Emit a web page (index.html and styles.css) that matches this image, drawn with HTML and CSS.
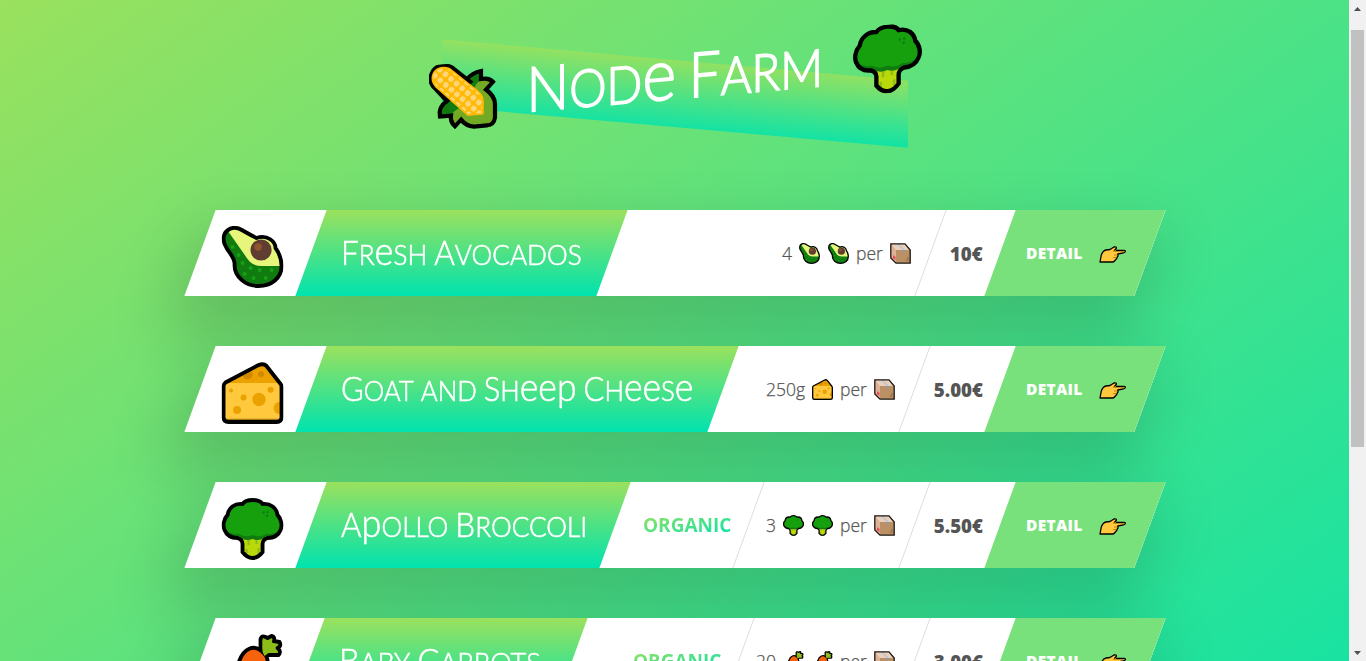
FILE: index.html
```
<!DOCTYPE html>
<html lang="en">
<head>
<meta charset="utf-8">
<title>Node Farm</title>
<link rel="stylesheet" href="styles.css">
</head>
<body>
<svg class="sprite" aria-hidden="true">
  <defs>
    <clipPath id="avo-clip"><path d="M2 13C2 5 9 1 15 2C19 2.5 21 5 35 12C46 8 54 16 54 22C59 29 60 35 60 40C60 52 50 60 37 60C23 60 13 50 13 39C14 33 8 27 5 22C3 19 2 16 2 13Z"/></clipPath>
    <clipPath id="cheese-clip"><path d="M2 55V24Q2 22 4 20.5L37 3Q42 1 45 4L59 22Q60 23 60 25V55Q60 60 55 60H7Q2 60 2 55Z"/></clipPath>
    <clipPath id="broc-clip"><path id="broc-shape" d="M31 2C26 2 23 3 21 6C13 5 7 10 6 17C2 21 1 28 3 32C5 37 10 40 16 40C19 41 21 43 21 46V54C24 58 28 60 31 60C34 60 38 58 41 54V46C41 43 43 41 46 40C52 40 57 37 59 32C61 28 60 21 56 17C55 10 49 5 41 6C39 3 36 2 31 2Z"/></clipPath>
    <pattern id="kernels" width="7.6" height="7.6" patternUnits="userSpaceOnUse" patternTransform="rotate(43)"><rect width="7.6" height="7.6" fill="#ffb900"/><circle cx="3.8" cy="3.8" r="2.9" fill="#ffd67a"/></pattern>
  </defs>
  <symbol id="avocado" viewBox="0 0 62 62">
    <g clip-path="url(#avo-clip)"><rect width="62" height="62" fill="#107c10"/><path d="M5 3L26 33Q31 40 40 40H62V0Z" fill="#e5f67b"/>
    <g fill="#16a016"><circle cx="11" cy="21" r="2"/><circle cx="17" cy="29" r="2"/><circle cx="13" cy="34" r="1"/><circle cx="21" cy="37" r="2"/><circle cx="29" cy="42" r="2"/><circle cx="38" cy="44" r="2"/><circle cx="50" cy="44" r="2"/><circle cx="23" cy="48" r="2"/><circle cx="32" cy="52" r="2"/><circle cx="44" cy="52" r="2"/></g>
    <circle cx="39.5" cy="24" r="10.6" fill="#603d30"/><circle cx="36.5" cy="21" r="3.7" fill="#8e562e"/></g>
    <path d="M2 13C2 5 9 1 15 2C19 2.5 21 5 35 12C46 8 54 16 54 22C59 29 60 35 60 40C60 52 50 60 37 60C23 60 13 50 13 39C14 33 8 27 5 22C3 19 2 16 2 13Z" fill="none" stroke="#000" stroke-width="3.9"/>
  </symbol>
  <symbol id="cheese" viewBox="0 0 62 62">
    <g clip-path="url(#cheese-clip)"><rect width="62" height="62" fill="#ffc83d"/><path d="M0 0H62V21H0Z" fill="#eba200"/><g fill="#d08805"><circle cx="26" cy="12.5" r="5"/><circle cx="39.5" cy="12.3" r="3"/></g>
    <g fill="#eba200"><circle cx="9.5" cy="28.5" r="2"/><circle cx="22" cy="35.5" r="3"/><circle cx="37.5" cy="37.5" r="6.7"/><circle cx="49" cy="27.8" r="3"/><circle cx="15.5" cy="48" r="4"/><circle cx="58" cy="46" r="6"/></g><path d="M0 57.5H62" stroke="#a87910" stroke-width="1.3"/></g>
    <path d="M2 55V24Q2 22 4 20.5L37 3Q42 1 45 4L59 22Q60 23 60 25V55Q60 60 55 60H7Q2 60 2 55Z" fill="none" stroke="#000" stroke-width="3.9"/>
  </symbol>
  <symbol id="broccoli" viewBox="0 0 62 62">
    <g clip-path="url(#broc-clip)"><rect width="62" height="62" fill="#bad80a"/><path d="M27 42V47M35 42V46M25 51V56M37 50V56" stroke="#8cbd18" stroke-width="2.2"/><path d="M0 0H62V39C54 42 46 39 41 41Q36 43 31 41Q26 43 21 41C16 39 8 42 0 39Z" fill="#107c10"/><path d="M0 0H62V26C58 35 51 36 45 36Q38 40 31 37Q24 40 17 36C11 36 4 35 0 26Z" fill="#16a00e"/><g fill="#107c10"><circle cx="42" cy="14.5" r="1.2"/><circle cx="46" cy="14" r="1.2"/><circle cx="45.5" cy="17.7" r="1.2"/></g></g>
    <use href="#broc-shape" fill="none" stroke="#000" stroke-width="3.9"/>
  </symbol>
  <symbol id="carrot" viewBox="0 0 62 62">
    <path d="M39 21V5Q40 1 44 3L46 4L50 2Q54 3 52 7L58 8Q60 12 56 14Q60 17 57 21L48 21Z" fill="#8cbd18" stroke="#000" stroke-width="3.9" stroke-linejoin="round"/>
    <path d="M3 59L17 29C22 13 33 11 40 17C49 24 47 33 41 39Z" fill="#f7630c" stroke="#000" stroke-width="3.9" stroke-linejoin="round"/>
    <path d="M41 18V6L46 9L51 5L50 10L57 10L52 15L57 19H47L43 22Z" fill="#8cbd18"/>
  </symbol>
  <symbol id="corn" viewBox="0 0 69 69">
    <path d="M38 17Q43 11 52 10V18Q60 17 64 22L57 29C63 34 66 38 66 44V58Q65 65 58 65H45Q37 64 32 57L26 63Q21 58 22 52H11Q9 42 18 37Z" fill="#73aa24"/>
    <path d="M38 18Q43 11 52 10V18Q47 22 45 27ZM11 52Q9 42 20 36L31 45Q25 47 22 52Z" fill="#107c10"/>
    <path d="M38 17Q43 11 52 10V18Q60 17 64 22L57 29C63 34 66 38 66 44V58Q65 65 58 65H45Q37 64 32 57L26 63Q21 58 22 52H11Q9 42 18 37" fill="none" stroke="#000" stroke-width="4.2"/>
    <path d="M4 6C8 0 18 0 24 5L41 20L18 37L6 23C0 17 1 11 4 6Z" fill="none" stroke="#000" stroke-width="4.4"/>
    <path d="M5 7C9 2 18 2 23 7L49 30Q54 35 54 40V53H39L7 22C3 17 2 12 5 7Z" fill="url(#kernels)" stroke="#ffb900" stroke-width="1.5"/>
  </symbol>
  <symbol id="package" viewBox="0 0 21 21">
    <path d="M1 1H15L20 7V20H6L1 15Z" fill="#e0b197"/><path d="M1 1H15L20 7H6Z" fill="#edceb9"/><path d="M6 7H20V20H6Z" fill="#bc9065"/><path d="M7 1L12 7H15L9 1Z" fill="#b8c9cf"/><path d="M12 7H15V9H12Z" fill="#929da0"/><path d="M3 12L5.5 14V17L3 15Z" fill="#e44b55"/><path d="M16 17H19M17 15H19" stroke="#8e562e" stroke-width=".8"/>
    <path d="M.8 .8H15L20.2 7V20.2H6L.8 15Z" fill="none" stroke="#1a1512" stroke-width="1.3"/>
  </symbol>
  <symbol id="point" viewBox="0 0 27 17">
    <path d="M1 16L2.3 9Q4 4.5 7 4L11 3.5L15 1Q17.5 .5 17.5 2L15.5 4.5H24.5Q26.5 4.2 26.3 5.6Q26 6.6 24.5 6.8L18.8 8L19 10Q18 11 18 12Q15 16 14 16Z" fill="#ffc83d" stroke="#000" stroke-width="1.3" stroke-linejoin="round"/>
    <path d="M14 5.5L17 4.5M15 9H18M14 11.5H17" stroke="#d67f05" stroke-width="1"/>
  </symbol>
</svg>

<div class="window">
  <main class="page">
    <h1 class="logo">
      <svg class="logo__icon logo__icon--corn"><use href="#corn"/></svg>
      <span class="logo__text megrim"><span class="word">Nod<i>e</i></span> <span class="word">Farm</span></span>
      <svg class="logo__icon"><use href="#broccoli"/></svg>
    </h1>
    <div class="cards">
      <figure class="card card--avocado">
        <div class="card__emoji"><svg class="unskew"><use href="#avocado"/></svg></div>
        <div class="card__title-box"><div class="unskew"><h2 class="card__title megrim"><span class="word">Fr<i>e</i>sh</span> <span class="word">Avocados</span></h2></div></div>
        <div class="card__details"><div class="card__detail unskew"><span>4</span><svg><use href="#avocado"/></svg><svg><use href="#avocado"/></svg><span>per</span><svg><use href="#package"/></svg></div></div>
        <div class="card__price"><span class="unskew">10€</span></div>
        <a class="card__link"><span class="unskew"><b>Detail</b><svg><use href="#point"/></svg></span></a>
      </figure>
      <figure class="card card--cheese">
        <div class="card__emoji"><svg class="unskew"><use href="#cheese"/></svg></div>
        <div class="card__title-box"><div class="unskew"><h2 class="card__title megrim"><span class="word">Goat</span> <span class="word word--low">and</span> <span class="word">Sh<i>eep</i></span> <span class="word">Ch<i>ee</i>s<i>e</i></span></h2></div></div>
        <div class="card__details"><div class="card__detail unskew"><span>250g</span><svg><use href="#cheese"/></svg><span>per</span><svg><use href="#package"/></svg></div></div>
        <div class="card__price"><span class="unskew">5.00€</span></div>
        <a class="card__link"><span class="unskew"><b>Detail</b><svg><use href="#point"/></svg></span></a>
      </figure>
      <figure class="card card--broccoli">
        <div class="card__emoji"><svg class="unskew"><use href="#broccoli"/></svg></div>
        <div class="card__title-box"><div class="unskew"><h2 class="card__title megrim"><span class="word">A<i>p</i>ollo</span> <span class="word">Broccoli</span></h2></div></div>
        <div class="card__organic"><span class="unskew">Organic</span></div>
        <div class="card__details"><div class="card__detail unskew"><span>3</span><svg><use href="#broccoli"/></svg><svg><use href="#broccoli"/></svg><span>per</span><svg><use href="#package"/></svg></div></div>
        <div class="card__price"><span class="unskew">5.50€</span></div>
        <a class="card__link"><span class="unskew"><b>Detail</b><svg><use href="#point"/></svg></span></a>
      </figure>
      <figure class="card card--carrot">
        <div class="card__emoji"><svg class="unskew"><use href="#carrot"/></svg></div>
        <div class="card__title-box"><div class="unskew"><h2 class="card__title megrim"><span class="word">Baby</span> <span class="word">Carrots</span></h2></div></div>
        <div class="card__organic"><span class="unskew">Organic</span></div>
        <div class="card__details"><div class="card__detail unskew"><span>20</span><svg><use href="#carrot"/></svg><svg><use href="#carrot"/></svg><span>per</span><svg><use href="#package"/></svg></div></div>
        <div class="card__price"><span class="unskew">3.00€</span></div>
        <a class="card__link"><span class="unskew"><b>Detail</b><svg><use href="#point"/></svg></span></a>
      </figure>
    </div>
  </main>
  <div class="scrollbar">
    <svg viewBox="0 0 17 17"><path d="M5 11L8.5 7L12 11Z"/></svg>
    <div class="scrollbar__thumb"></div>
    <svg viewBox="0 0 17 17"><path d="M5 7L8.5 11L12 7Z"/></svg>
  </div>
</div>
</body>
</html>
```
FILE: styles.css
```
* { box-sizing: border-box; margin: 0; padding: 0; }
body { overflow: hidden; font-family: "Open Sans", "Noto Sans", sans-serif; color: #555; }
.sprite { position: absolute; width: 0; height: 0; }
svg { display: block; flex: none; }

.window { display: grid; grid-template-columns: 1fr 17px; height: 661px; overflow: hidden; }
.page {
  height: 661px;
  overflow: hidden;
  padding-top: 43px;
  background: linear-gradient(to bottom right, #9be15d, #00e3ae) 0 -20px / 1349px 994px no-repeat;
}

/* Display lettering: reduced capitals with tall initials */
.megrim { font-family: Lato, "Open Sans", sans-serif; font-weight: 300; white-space: nowrap; color: #fff; -webkit-text-stroke: .6px #fff; }
.word { display: inline-block; text-transform: uppercase; }
.word::first-letter { font-size: 1.2em; }
.word--low::first-letter { font-size: 1em; }
.word i { font-style: normal; text-transform: none; font-size: 1.38em; line-height: 0; }

.logo {
  position: relative;
  display: flex;
  justify-content: space-between;
  align-items: center;
  width: 494px;
  height: 69px;
  margin: 0 auto 98px;
  transform: skewY(-5deg);
}
.logo::before {
  content: "";
  position: absolute;
  z-index: -1;
  top: 17px;
  left: 14px;
  width: 466px;
  height: 67px;
  background: linear-gradient(to bottom, #9be15d, #00e3ae);
  opacity: .8;
  transform: skewY(10deg);
}
.logo__icon { width: 69px; height: 69px; }
.logo__icon--corn { transform: translate(1px, 1px); }
.logo__text { font-size: 52px; line-height: 69px; transform: translateY(-1px) scaleX(.905); -webkit-text-stroke-width: 1.6px; }

.cards { display: grid; gap: 50px; width: 950px; margin: 0 auto; }
.card {
  display: grid;
  height: 86px;
  overflow: hidden;
  background: #fff;
  box-shadow: 0 30px 60px 10px rgba(0, 0, 0, .16);
  transform: skewX(-20deg);
}
.card--avocado { grid-template-columns: 111px 301px 318px 70px 150px; }
.card--cheese { grid-template-columns: 111px 412px 191px 86px 150px; }
.card--broccoli { grid-template-columns: 111px 304px 133px 166px 86px 150px; }
.card--carrot { grid-template-columns: 109px 263px 166px 176px 86px 150px; }
.unskew { transform: skewX(20deg); }

.card__emoji { padding: 16px 0 0 23px; }
.card__emoji svg { width: 62px; height: 62px; }
.card__title-box { display: flex; align-items: center; padding-left: 30px; background: linear-gradient(to bottom, #9be15d, #00e3ae); }
.card__title { font-size: 28px; line-height: 40px; transform: scaleX(.934); transform-origin: left; }
.card--cheese .card__title { transform: scaleX(.921); }
.card--carrot .card__title { transform: scaleX(.97); }
.card__organic, .card__details, .card__price { display: flex; align-items: center; justify-content: flex-end; }
.card__organic + .card__details, .card__price { border-left: 1px solid #ddd; }
.card__organic { padding-right: 17px; font-size: 19px; font-weight: 700; text-transform: uppercase; }
.card__organic span { background: linear-gradient(to bottom right, #9be15d, #00e3ae); -webkit-background-clip: text; background-clip: text; color: transparent; }
.card__details { padding-right: 19px; }
.card__detail { display: flex; align-items: center; gap: 7px; font-size: 17.5px; font-weight: 300; -webkit-text-stroke: .25px #555; }
.card__detail svg { width: 21px; height: 21px; }
.card__detail svg + svg { margin-left: 1px; }
.card__price { padding-right: 17px; font-size: 18.7px; font-weight: 800; }
.card__link { display: flex; align-items: center; justify-content: center; background: #79e17b; color: #fff; font-size: 15.5px; text-transform: uppercase; }
.card__link span { display: flex; align-items: center; gap: 16px; padding-left: 1px; }
.card__link b { font-weight: 800; letter-spacing: .3px; }
.card__link svg { width: 27px; height: 17px; margin-top: 3px; }

.scrollbar { display: grid; grid-template-rows: 17px 1fr 17px; background: #f1f1f1; fill: #505050; }
.scrollbar__thumb { width: 13px; height: 417px; margin: 13px 0 0 2px; background: #c1c1c1; }
```
